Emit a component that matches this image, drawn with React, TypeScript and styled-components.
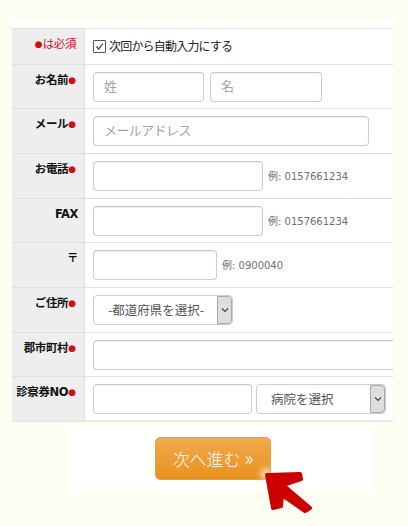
import React from "react";
import styled, { createGlobalStyle } from "styled-components";

const Global = createGlobalStyle`
  html, body {
    margin: 0;
    background: #fdfdf1;
  }
  body {
    font-family: "Noto Sans CJK JP", "DejaVu Sans", sans-serif;
    color: #222;
  }
`;

const Page = styled.div`
  position: relative;
  width: 408px;
  height: 526px;
  overflow: hidden;
  padding: 19px 15px 0 12px;
  box-sizing: border-box;
`;

const Card = styled.div`
  background: #fff;
  padding-top: 9px;
  overflow: hidden;
  border-bottom: 2px solid #e9e9e9;
`;

const Row = styled.div<{ $h: number }>`
  display: flex;
  height: ${(p) => p.$h}px;
  border-top: 1px solid #dfdfdf;
  box-sizing: border-box;
`;

const Label = styled.div<{ $red?: boolean; $flush?: boolean }>`
  flex: 0 0 73px;
  box-sizing: border-box;
  background: #eeeeee;
  border-right: 1px solid #e2e2e2;
  padding: 7px ${(p) => (p.$flush ? 6 : 8)}px 0 0;
  text-align: right;
  font-family: "DejaVu Sans", "Noto Sans CJK JP", sans-serif;
  font-size: 11.5px;
  line-height: 17px;
  letter-spacing: -0.4px;
  font-weight: ${(p) => (p.$red ? 400 : 700)};
  color: ${(p) => (p.$red ? "#d0121b" : "#111")};
  white-space: nowrap;
`;

const Req = styled.span`
  color: #d40f0f;
  font-size: 9px;
  font-weight: 400;
  letter-spacing: 0;
  position: relative;
  top: -1px;
`;

const Cell = styled.div`
  flex: 1;
  min-width: 0;
  display: flex;
  align-items: flex-start;
  gap: 6px;
  padding: 7px 0 0 8px;
`;

const Field = styled.div<{ $w: number }>`
  flex: 0 0 ${(p) => p.$w}px;
  height: 30px;
  box-sizing: border-box;
  background: #fff;
  border: 1px solid #ccc;
  border-top-color: #c6c6c6;
  border-radius: 4px;
  box-shadow: inset 0 1px 1px rgba(0, 0, 0, 0.07);
  padding: 0 10px;
  font-size: 13px;
  letter-spacing: -0.6px;
  line-height: 25px;
  color: #a3a3a3;
`;

const Hint = styled.span`
  margin: 9px 0 0 -1px;
  font-family: "DejaVu Sans", "Noto Sans CJK JP", sans-serif;
  font-size: 10px;
  line-height: 14px;
  color: #6e6e6e;
  white-space: nowrap;
`;

const SelectBox = styled.div<{ $w: number; $tight?: boolean }>`
  flex: 0 0 ${(p) => p.$w}px;
  height: 30px;
  margin-left: ${(p) => (p.$tight ? -2 : 0)}px;
  box-sizing: border-box;
  display: flex;
  background: #fff;
  border: 1px solid #ccc;
  border-radius: 4px;
  overflow: hidden;
  font-size: 12.5px;
  line-height: 27px;
  color: #555;
`;

const SelectText = styled.span`
  flex: 1;
  padding-left: 14px;
  white-space: nowrap;
`;

const SelectArrow = styled.span`
  flex: 0 0 15px;
  box-sizing: border-box;
  display: flex;
  align-items: center;
  justify-content: center;
  background: #dedede;
  border: 1px solid #aaa;
  border-radius: 0 4px 4px 0;
`;

const CheckLine = styled.label`
  display: flex;
  align-items: center;
  gap: 3px;
  margin-top: 1px;
  font-size: 12px;
  letter-spacing: -0.8px;
  line-height: 18px;
  color: #222;
`;

const CheckBox = styled.span`
  width: 11px;
  height: 11px;
  border: 1px solid #555;
  border-radius: 1px;
  display: flex;
  align-items: center;
  justify-content: center;
  background: #fff;
`;

const Footer = styled.div`
  margin: 7px 19px 0 57px;
  height: 62px;
  background: #fff;
  padding: 8px 0 0 86px;
  box-sizing: border-box;
`;

const Next = styled.button`
  display: block;
  width: 116px;
  height: 43px;
  border: 1px solid #e8a040;
  border-radius: 5px;
  background: linear-gradient(#f0aa4e, #e8921c);
  color: #fff;
  font-family: "Noto Sans CJK JP", sans-serif;
  font-size: 17px;
  font-weight: 300;
  padding: 0;
`;

const Chevrons = styled.span`
  font-size: 20px;
  line-height: 17px;
`;

const Glow = styled.div`
  position: absolute;
  left: 261px;
  top: 468px;
  width: 10px;
  height: 12px;
  border-radius: 50%;
  background: #fff;
  opacity: 0.75;
  filter: blur(3px);
`;

const Pointer = styled.svg`
  position: absolute;
  left: 258px;
  top: 462px;
`;

const Chevron = () => (
  <svg width="8" height="6" viewBox="0 0 8 6">
    <path d="M1 1.5 L4 4.5 L7 1.5" fill="none" stroke="#444" strokeWidth="1.2" />
  </svg>
);

const App = () => (
  <Page>
    <Global />
    <Card>
      <Row $h={36}>
        <Label $red>
          <Req>●</Req>は必須
        </Label>
        <Cell>
          <CheckLine>
            <CheckBox>
              <svg width="9" height="9" viewBox="0 0 9 9">
                <path d="M1.5 4.5 L3.7 7 L7.8 1.5" fill="none" stroke="#333" strokeWidth="1.2" />
              </svg>
            </CheckBox>
            次回から自動入力にする
          </CheckLine>
        </Cell>
      </Row>
      <Row $h={44}>
        <Label>
          お名前<Req>●</Req>
        </Label>
        <Cell>
          <Field $w={111}>姓</Field>
          <Field $w={112}>名</Field>
        </Cell>
      </Row>
      <Row $h={45}>
        <Label>
          メール<Req>●</Req>
        </Label>
        <Cell>
          <Field $w={276}>メールアドレス</Field>
        </Cell>
      </Row>
      <Row $h={45}>
        <Label>
          お電話<Req>●</Req>
        </Label>
        <Cell>
          <Field $w={170} />
          <Hint>例: 0157661234</Hint>
        </Cell>
      </Row>
      <Row $h={44}>
        <Label $flush>FAX</Label>
        <Cell>
          <Field $w={170} />
          <Hint>例: 0157661234</Hint>
        </Cell>
      </Row>
      <Row $h={45}>
        <Label $flush>〒</Label>
        <Cell>
          <Field $w={124} />
          <Hint>例: 0900040</Hint>
        </Cell>
      </Row>
      <Row $h={45}>
        <Label>
          ご住所<Req>●</Req>
        </Label>
        <Cell>
          <SelectBox $w={140}>
            <SelectText>-都道府県を選択-</SelectText>
            <SelectArrow>
              <Chevron />
            </SelectArrow>
          </SelectBox>
        </Cell>
      </Row>
      <Row $h={44}>
        <Label>
          郡市町村<Req>●</Req>
        </Label>
        <Cell>
          <Field $w={310} />
        </Cell>
      </Row>
      <Row $h={44}>
        <Label>
          診察券NO<Req>●</Req>
        </Label>
        <Cell>
          <Field $w={159} />
          <SelectBox $w={130} $tight>
            <SelectText>病院を選択</SelectText>
            <SelectArrow>
              <Chevron />
            </SelectArrow>
          </SelectBox>
        </Cell>
      </Row>
    </Card>
    <Footer>
      <Next>
        次へ進む <Chevrons>»</Chevrons>
      </Next>
    </Footer>
    <Glow />
    <Pointer width="60" height="54" viewBox="0 0 60 54">
      <polygon
        points="9,13 42,12 43,17 25,23 52,46 47,49 24,33 23,44 15,46"
        fill="#cc0000"
        stroke="#cc0000"
        strokeWidth="4"
        strokeLinejoin="round"
      />
    </Pointer>
  </Page>
);

export default App;
